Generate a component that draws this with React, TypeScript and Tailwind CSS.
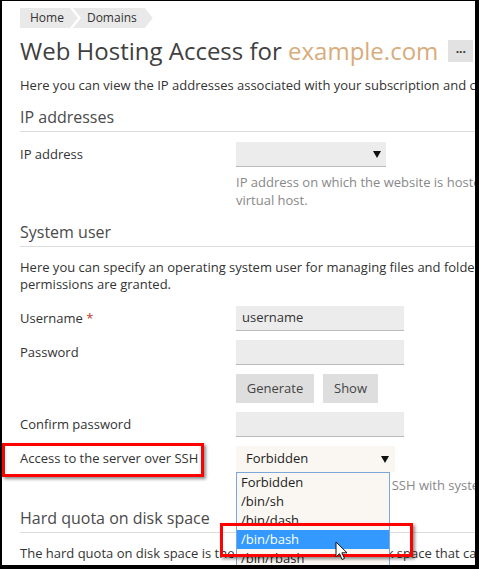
import React from 'react'

// ── small pieces ──────────────────────────────────────────────────────────────

const FONT = "font-['Open_Sans','Noto_Sans',sans-serif]"

function Caret() {
  return (
    <svg width="8" height="7" viewBox="0 0 8 7" className="shrink-0">
      <path d="M0 0h8L4 7z" fill="#111" />
    </svg>
  )
}

function SectionTitle({ children, className = '' }: { children: React.ReactNode; className?: string }) {
  return (
    <div className={`border-b border-[#dcdcdc] pb-[3px] text-[16px] leading-[22px] text-[#4a4a4a] ${className}`}>
      {children}
    </div>
  )
}

function Row({ label, children, className = '' }: { label: React.ReactNode; children: React.ReactNode; className?: string }) {
  return (
    <div className={`flex ${className}`}>
      <div className="w-[216px] shrink-0 pt-[4px] text-[13px] leading-[17px] text-[#333]">{label}</div>
      <div className="min-w-0 flex-1">{children}</div>
    </div>
  )
}

function TextInput({ value = '' }: { value?: string }) {
  return (
    <div className="flex h-[25px] w-[168px] items-center border-b border-[#b8bcbf] bg-[#ececec] px-[6px] text-[13px] text-[#333]">
      {value}
    </div>
  )
}

function Cursor() {
  return (
    <svg width="14" height="20" viewBox="0 0 14 20" className="absolute left-[333px] top-[540px]">
      <path d="M1 1v15l3.5-3.3 2.6 5.8 2.4-1.1-2.6-5.6H12z" fill="#fff" stroke="#111" strokeWidth="1" strokeLinejoin="round" />
    </svg>
  )
}

// ── page ──────────────────────────────────────────────────────────────────────

export default function App() {
  return (
    <div className={`h-[569px] w-[479px] overflow-hidden bg-black pl-[2px] pr-[4px] pt-[1px] ${FONT}`}>
      <div className="relative h-[564px] w-full overflow-hidden bg-white pl-[18px]">
        {/* breadcrumbs */}
        <div className="mt-[7px] flex h-[20px] text-[12px] leading-[20px] text-[#333]">
          <div className="bg-[#e9e9e9] pl-[10px] pr-[14px] [clip-path:polygon(0_0,calc(100%-8px)_0,100%_50%,calc(100%-8px)_100%,0_100%)]">
            Home
          </div>
          <div className="-ml-[5px] bg-[#e9e9e9] pl-[14px] pr-[16px] [clip-path:polygon(0_0,calc(100%-8px)_0,100%_50%,calc(100%-8px)_100%,0_100%,8px_50%)]">
            Domains
          </div>
        </div>

        {/* title */}
        <div className="mt-[7px] flex h-[32px] items-center whitespace-nowrap">
          <span className="text-[24px] leading-[32px] text-[#404040]">
            Web Hosting Access for <span className="text-[#d8ac7c]">example.com</span>
          </span>
          <span className="ml-[10px] flex h-[22px] w-[25px] items-center justify-center bg-[#e2e2e2] pb-[4px] text-[12px] font-bold leading-none text-[#333]">
            ...
          </span>
        </div>

        <div className="mt-[10px] whitespace-nowrap text-[13px] leading-[17px] text-[#333]">
          Here you can view the IP addresses associated with your subscription and change them.
        </div>

        <SectionTitle className="mt-[12px]">IP addresses</SectionTitle>

        <Row label="IP address" className="mt-[10px]">
          <div className="flex h-[25px] w-[150px] items-center justify-end border-b border-[#b8bcbf] bg-[#ececec] pr-[5px]">
            <Caret />
          </div>
          <div className="mt-[6px] whitespace-nowrap text-[13px] leading-[18px] text-[#888]">
            IP address on which the website is hosted if it is a name-based
            <br />
            virtual host.
          </div>
        </Row>

        <SectionTitle className="mt-[12px]">System user</SectionTitle>

        <div className="mt-[12px] whitespace-nowrap text-[13px] leading-[17px] text-[#333]">
          Here you can specify an operating system user for managing files and folders to which
          <br />
          permissions are granted.
        </div>

        <Row label={<>Username <span className="text-[#c0392b]">*</span></>} className="mt-[13px]">
          <TextInput value="username" />
        </Row>
        <Row label="Password" className="mt-[9px]">
          <TextInput />
          <div className="mt-[9px] flex gap-[9px] text-[13px] text-[#444]">
            <div className="flex h-[29px] w-[78px] items-center justify-center bg-[#dedede]">Generate</div>
            <div className="flex h-[29px] w-[55px] items-center justify-center bg-[#dedede]">Show</div>
          </div>
        </Row>
        <Row label="Confirm password" className="mt-[9px]">
          <TextInput />
        </Row>
        <Row label="Access to the server over SSH" className="mt-[9px]">
          <div className="flex h-[26px] w-[159px] items-center justify-between bg-[#faf7f2] pl-[10px] pr-[6px] text-[13px] text-[#222]">
            Forbidden
            <Caret />
          </div>
          <div className="mt-[4px] whitespace-nowrap text-[13px] leading-[18px] text-[#888]">
            Allows you to connect via SSH with system user credentials.
          </div>
        </Row>

        <SectionTitle className="mt-[13px]">Hard quota on disk space</SectionTitle>

        <div className="mt-[12px] whitespace-nowrap text-[13px] leading-[17px] text-[#333]">
          The hard quota on disk space is the maximum amount of disk space that can be used.
        </div>

        {/* open select list */}
        <div className="absolute left-[234px] top-[471px] h-[100px] w-[154px] overflow-hidden border border-[#7fa6d8] bg-[#faf7f2] text-[13px] leading-[19px] text-[#222]">
          <div className="pl-[4px]">Forbidden</div>
          <div className="pl-[4px]">/bin/sh</div>
          <div className="pl-[4px]">/bin/dash</div>
          <div className="bg-[#3399ff] pl-[4px] text-white">/bin/bash</div>
          <div className="pl-[4px]">/bin/rbash</div>
        </div>

        {/* annotation boxes */}
        <div className="absolute left-[0px] top-[442px] h-[34px] w-[202px] border-[3px] border-[#ff0000] shadow-[2px_2px_3px_rgba(0,0,0,0.45)]" />
        <div className="absolute left-[218px] top-[522px] h-[34px] w-[193px] border-[3px] border-[#ff0000] shadow-[2px_2px_3px_rgba(0,0,0,0.45)]" />

        <Cursor />
      </div>
    </div>
  )
}
